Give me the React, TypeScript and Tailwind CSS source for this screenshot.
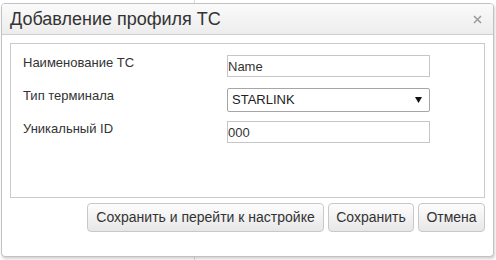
import React from 'react';

const font = { fontFamily: '"Liberation Sans", Arial, sans-serif' };

interface FieldRowProps {
  label: string;
  children: React.ReactNode;
  className?: string;
}

const FieldRow: React.FC<FieldRowProps> = ({ label, children, className }) => (
  <div className={`flex items-start ${className ?? ''}`}>
    <div className="w-[204px] text-[13px] leading-[15px] text-[#333]">{label}</div>
    {children}
  </div>
);

const TextField: React.FC<{ value: string }> = ({ value }) => (
  <div className="w-[203px] h-[22px] border border-[#c6c6c6] bg-white flex items-center text-[13px] text-[#333] leading-none">
    {value}
  </div>
);

const Button: React.FC<{ label: string; width: string }> = ({ label, width }) => (
  <button
    className={`${width} h-[29px] rounded-[4px] border border-[#c8c8c8] bg-gradient-to-b from-[#fdfdfd] to-[#e7e7e7] text-[14px] text-[#333] flex items-center justify-center`}
  >
    {label}
  </button>
);

export default function App() {
  return (
    <div className="relative w-[496px] h-[260px] bg-white" style={font}>
      {/* page content under the modal */}
      <div className="absolute left-[194px] top-0 w-px h-full bg-[#dcdcdc]" />

      <div className="relative ml-[1px] pt-[3px]">
        <div className="w-[493px] h-[254px] bg-white border border-[#c2c2c2] rounded-[4px] shadow-[1px_2px_3px_rgba(0,0,0,0.18)] flex flex-col overflow-hidden">
          {/* Header */}
          <div className="h-[31px] flex items-center justify-between pl-[8px] pr-[11px] bg-gradient-to-b from-[#fafafa] to-[#ededed] border-b border-[#cfcfcf]">
            <span className="text-[18px] text-[#333] leading-none">Добавление профиля ТС</span>
            <svg width="9" height="9" viewBox="0 0 9 9">
              <path d="M1 1L8 8M8 1L1 8" stroke="#9a9a9a" strokeWidth="1.5" />
            </svg>
          </div>

          {/* Body */}
          <div className="px-[8px] pt-[8px]">
            <div className="h-[155px] border border-[#cacaca] pl-[12px] pt-[11px]">
              <FieldRow label="Наименование ТС">
                <TextField value="Name" />
              </FieldRow>
              <FieldRow label="Тип терминала" className="mt-[11px]">
                <div className="w-[203px] h-[24px] border border-[#a6a6a6] rounded-[2px] bg-white flex items-center justify-between pl-[4px] pr-[7px] text-[13px] text-[#222]">
                  <span>STARLINK</span>
                  <svg width="7" height="6" viewBox="0 0 7 6">
                    <path d="M0 0H7L3.5 6Z" fill="#111" />
                  </svg>
                </div>
              </FieldRow>
              <FieldRow label="Уникальный ID" className="mt-[9px]">
                <TextField value="000" />
              </FieldRow>
            </div>

            <div className="flex justify-end gap-[4px] mt-[5px]">
              <Button label="Сохранить и перейти к настройке" width="w-[237px]" />
              <Button label="Сохранить" width="w-[86px]" />
              <Button label="Отмена" width="w-[67px]" />
            </div>
          </div>
        </div>
      </div>
    </div>
  );
}
